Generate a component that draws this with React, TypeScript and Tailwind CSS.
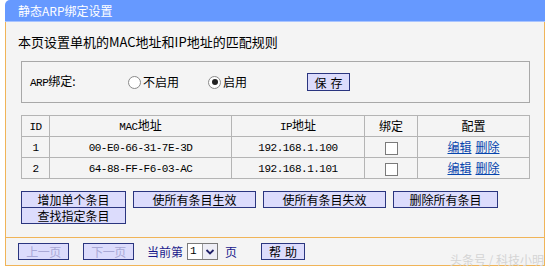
import React from "react";

const rows = [
  { id: 1, mac: "00-E0-66-31-7E-3D", ip: "192.168.1.100" },
  { id: 2, mac: "64-88-FF-F6-03-AC", ip: "192.168.1.101" },
];

const btn =
  "h-[17px] bg-[#dcdcfc] border border-[#2a357f] text-[12px] leading-[15px] text-center";

function Radio({ checked }: { checked?: boolean }) {
  return (
    <span className="inline-flex w-[13px] h-[13px] rounded-full border border-[#8a8a8a] bg-white items-center justify-center mr-[2px]">
      {checked && <span className="w-[6px] h-[6px] rounded-full bg-[#222]" />}
    </span>
  );
}

export default function App() {
  const cell = "border border-[#b4b4b4] h-[21px] text-[12px] text-black text-center";
  const mono = "font-['Liberation_Mono'] text-[11px] tracking-[-0.5px]";

  return (
    <div className="relative w-[548px] h-[268px] bg-white font-['Noto_Sans_CJK_SC',sans-serif] overflow-hidden">
      <div className="ml-[5px] w-[540px]">
        {/* title bar */}
        <div className="h-[22px] bg-[#6699ff] rounded-tl-[5px] text-white text-[12px] leading-[22px] pl-[13px] border-b border-[#a9c4ff]">
          静态ARP绑定设置
        </div>

        <div className="bg-[#f4f4f4] border-x border-[#f0b458]">
          <div className="h-[39px] pl-[12px] pt-[11px] text-[13px] leading-[17px] text-black">
            本页设置单机的MAC地址和IP地址的匹配规则
          </div>

          {/* ARP switch */}
          <div className="ml-[15px] w-[509px] h-[42px] border border-[#a8a8a8] flex items-center text-[12px] text-black">
            <span className="ml-[8px] w-[98px]">
              <span className={mono}>ARP</span>绑定:
            </span>
            <label className="flex items-center w-[80px]">
              <Radio />不启用
            </label>
            <label className="flex items-center w-[99px]">
              <Radio checked />启用
            </label>
            <button className={`${btn} text-black w-[43px] h-[18px] tracking-[4px] pl-[4px]`}>保存</button>
          </div>

          {/* table */}
          <table className="ml-[15px] mt-[12px] w-[509px] border-collapse border border-[#a0a0a0]">
            <thead>
              <tr>
                <th className={`${cell} font-normal w-[28px]`}><span className={mono}>ID</span></th>
                <th className={`${cell} font-normal w-[182px]`}><span className={mono}>MAC</span>地址</th>
                <th className={`${cell} font-normal w-[133px]`}><span className={mono}>IP</span>地址</th>
                <th className={`${cell} font-normal w-[53px]`}>绑定</th>
                <th className={`${cell} font-normal`}>配置</th>
              </tr>
            </thead>
            <tbody>
              {rows.map((r) => (
                <tr key={r.id}>
                  <td className={cell}><span className={mono}>{r.id}</span></td>
                  <td className={cell}><span className={mono}>{r.mac}</span></td>
                  <td className={cell}><span className={mono}>{r.ip}</span></td>
                  <td className={cell}>
                    <span className="inline-block w-[13px] h-[13px] bg-white border border-[#7a7a7a] align-middle" />
                  </td>
                  <td className={cell}>
                    <a className="text-[#0645ad] underline mr-[4px]">编辑</a>
                    <a className="text-[#0645ad] underline">删除</a>
                  </td>
                </tr>
              ))}
            </tbody>
          </table>

          {/* action buttons */}
          <div className="ml-[15px] mt-[12px] flex flex-wrap w-[490px] gap-x-[7px] pb-[13px] text-black">
            <button className={`${btn} w-[105px]`}>增加单个条目</button>
            <button className={`${btn} w-[123px]`}>使所有条目生效</button>
            <button className={`${btn} w-[123px]`}>使所有条目失效</button>
            <button className={`${btn} w-[105px]`}>删除所有条目</button>
            <button className={`${btn} w-[105px] -mt-[1px]`}>查找指定条目</button>
          </div>

          {/* pager */}
          <div className="h-[29px] border-y border-[#f0b458] flex items-center pl-[12px] text-[12px] text-black">
            <button className={`${btn} w-[51px] text-[#a9a9d6] tracking-[-0.5px]`}>上一页</button>
            <button className={`${btn} w-[51px] ml-[14px] text-[#a9a9d6] tracking-[-0.5px]`}>下一页</button>
            <span className="ml-[13px] text-[#1a1a8c]">当前第</span>
            <span className="ml-[4px] inline-flex h-[17px] w-[31px] border border-[#7a7a7a] bg-white">
              <span className={`${mono} w-[14px] leading-[14px] pl-[2px]`}>1</span>
              <span className="flex-1 border-l border-[#9a9a9a] bg-[#eeeef6] flex items-center justify-center">
                <svg width="10" height="8" viewBox="0 0 10 8">
                  <path d="M1.5 2 L5 5.5 L8.5 2" fill="none" stroke="#22226a" strokeWidth="1.8" />
                </svg>
              </span>
            </span>
            <span className="ml-[7px] text-[#1a1a8c]">页</span>
            <button className={`${btn} text-black w-[44px] ml-[24px] tracking-[4px] pl-[4px]`}>帮助</button>
          </div>
        </div>
      </div>

      <div className="absolute right-[4px] top-[251px] text-[12px] text-[#d4d4d4]">
        头条号 / 科技小明
      </div>
    </div>
  );
}
